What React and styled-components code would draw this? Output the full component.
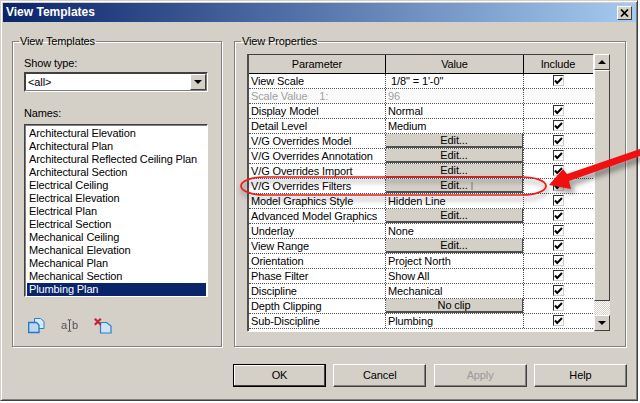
import React from "react";
import styled, { createGlobalStyle } from "styled-components";

const FONT = `"Liberation Sans", Arial, sans-serif`;

const names = [
  "Architectural Elevation",
  "Architectural Plan",
  "Architectural Reflected Ceiling Plan",
  "Architectural Section",
  "Electrical Ceiling",
  "Electrical Elevation",
  "Electrical Plan",
  "Electrical Section",
  "Mechanical Ceiling",
  "Mechanical Elevation",
  "Mechanical Plan",
  "Mechanical Section",
  "Plumbing Plan",
];

const rows = [
  { name: "View Scale", value: "1/8\" = 1'-0\"", indent: true, check: true },
  { name: "Scale Value    1:", value: "96", muted: true },
  { name: "Display Model", value: "Normal", check: true },
  { name: "Detail Level", value: "Medium", check: true },
  { name: "V/G Overrides Model", button: "Edit...", check: true },
  { name: "V/G Overrides Annotation", button: "Edit...", check: true },
  { name: "V/G Overrides Import", button: "Edit...", check: true },
  { name: "V/G Overrides Filters", button: "Edit...", check: true },
  { name: "Model Graphics Style", value: "Hidden Line", check: true },
  { name: "Advanced Model Graphics", button: "Edit...", check: true },
  { name: "Underlay", value: "None", check: true },
  { name: "View Range", button: "Edit...", check: true },
  { name: "Orientation", value: "Project North", check: true },
  { name: "Phase Filter", value: "Show All", check: true },
  { name: "Discipline", value: "Mechanical", check: true },
  { name: "Depth Clipping", button: "No clip", check: true },
  { name: "Sub-Discipline", value: "Plumbing", check: true },
];

function App() {
  return (
    <Page>
      <GlobalStyle />
      <Dialog>
        <TitleBar>
          <TitleText>View Templates</TitleText>
          <CloseButton>
            <svg width="9" height="8" viewBox="0 0 9 8">
              <path d="M1 0.5L8 7.5M8 0.5L1 7.5" stroke="#000" strokeWidth="1.7" />
            </svg>
          </CloseButton>
        </TitleBar>

        <Panels>
          <LeftGroup>
            <Legend $shift={-5}>View Templates</Legend>
            <FieldLabel>Show type:</FieldLabel>
            <ComboBox>
              <ComboText>&lt;all&gt;</ComboText>
              <ScrollButton>
                <Triangle $down />
              </ScrollButton>
            </ComboBox>
            <NamesLabel>Names:</NamesLabel>
            <ListBox>
              {names.map((n) => (
                <ListItem key={n} $selected={n === "Plumbing Plan"}>{n}</ListItem>
              ))}
            </ListBox>
            <IconRow>
              <IconSlot>
                <svg width="17" height="16" viewBox="0 0 17 16">
                  <path d="M6.5 0.5H12.5L16 3.5V10.5H6.5Z" fill="#dcebfa" stroke="#2a7fc9" />
                  <path d="M0.7 4.5H8.5L11 7V14.5H0.7Z" fill="#bcd8f2" stroke="#1f78c8" strokeWidth="1.3" />
                </svg>
              </IconSlot>
              <RenameIcon>
                <span>a</span>
                <svg width="7" height="17" viewBox="0 0 7 17">
                  <path d="M1 0.5H3L3.5 1.5L4 0.5H6M3.5 1.5V15.5M1 16.5H3L3.5 15.5L4 16.5H6" fill="none" stroke="#222" />
                </svg>
                <span>b</span>
              </RenameIcon>
              <IconSlot>
                <svg width="18" height="16" viewBox="0 0 18 16">
                  <path d="M6.5 4.5H12.5L17 8V15H6.5Z" fill="#cfe3f6" stroke="#2a7fc9" strokeWidth="1.2" />
                  <path d="M0.8 0.8L6.8 6.8M6.8 0.8L0.8 6.8" stroke="#cc2030" strokeWidth="2.2" />
                </svg>
              </IconSlot>
            </IconRow>
          </LeftGroup>

          <RightGroup>
            <Legend $shift={-6}>View Properties</Legend>
            <TableArea>
              <PropsTable>
                <HeaderRow>
                  <HeaderCell>Parameter</HeaderCell>
                  <HeaderCell>Value</HeaderCell>
                  <HeaderCell>Include</HeaderCell>
                </HeaderRow>
                {rows.map((r) => (
                  <Row key={r.name} $muted={r.muted}>
                    <NameCell>{r.name}</NameCell>
                    <ValueCell $indent={r.indent}>
                      {r.button ? <EditButton>{r.button}</EditButton> : r.value}
                    </ValueCell>
                    <CheckCell>
                      {r.check && (
                        <CheckBox>
                          <svg width="9" height="8" viewBox="0 0 9 8">
                            <path d="M1 3.5L3.2 6L8 1" fill="none" stroke="#000" strokeWidth="2" />
                          </svg>
                        </CheckBox>
                      )}
                    </CheckCell>
                  </Row>
                ))}
              </PropsTable>
              <ScrollBar>
                <ScrollButton><Triangle /></ScrollButton>
                <Thumb />
                <Track />
                <ScrollButton><Triangle $down /></ScrollButton>
              </ScrollBar>
            </TableArea>
          </RightGroup>
        </Panels>

        <ButtonRow>
          <DialogButton $primary>OK</DialogButton>
          <DialogButton>Cancel</DialogButton>
          <DialogButton $disabled>Apply</DialogButton>
          <DialogButton>Help</DialogButton>
        </ButtonRow>
      </Dialog>

      <Annotation width="640" height="403" viewBox="0 0 640 403">
        <defs>
          <filter id="soft" x="-20%" y="-60%" width="140%" height="220%">
            <feGaussianBlur stdDeviation="2.5" />
          </filter>
        </defs>
        <rect x="242" y="181" width="305" height="18" rx="24" ry="9" fill="none" stroke="#000" strokeOpacity="0.3" strokeWidth="2.5" filter="url(#soft)" />
        <rect x="241" y="177" width="305" height="18" rx="24" ry="9" fill="none" stroke="#ee1c1c" strokeWidth="1.7" />
        <path d="M472 182V190" stroke="#777" />
        <path d="M549 185L563 169L567 174L640 149V156L569 181L571 189Z" fill="#000" fillOpacity="0.35" filter="url(#soft)" transform="translate(4 5)" />
        <path d="M549 185L563 169L567 174L640 149V156L569 181L571 189Z" fill="#f01010" />
      </Annotation>
    </Page>
  );
}

const GlobalStyle = createGlobalStyle`
  html, body {
    margin: 0;
    padding: 0;
    background: #fff;
  }
`;

const Page = styled.div`
  position: relative;
  width: 640px;
  height: 403px;
  overflow: hidden;
`;

const Dialog = styled.div`
  width: 638px;
  height: 401px;
  box-sizing: border-box;
  padding: 2px 1px 1px 2px;
  background: #d4d0c8;
  border: 1px solid;
  border-color: #d4d0c8 #404040 #404040 #d4d0c8;
  box-shadow: inset 1px 1px 0 #fff, inset -1px -1px 0 #808080;
  font: 11px/13px ${FONT};
  letter-spacing: -0.12px;
  color: #000;
  display: flex;
  flex-direction: column;
`;

const TitleBar = styled.div`
  height: 19px;
  flex: none;
  display: flex;
  align-items: center;
  justify-content: space-between;
  padding: 0 4px 0 3px;
  background: linear-gradient(90deg, #0a246a 0%, #a6caf0 100%);
`;

const TitleText = styled.div`
  font: bold 12px/19px ${FONT};
  letter-spacing: 0;
  color: #fff;
`;

const CloseButton = styled.div`
  width: 15px;
  height: 14px;
  box-sizing: border-box;
  display: flex;
  align-items: center;
  justify-content: center;
  background: #d4d0c8;
  border: 1px solid;
  border-color: #fff #404040 #404040 #fff;
`;

const Panels = styled.div`
  display: flex;
  gap: 12px;
  padding: 13px 9px 0 9px;
`;

const LeftGroup = styled.fieldset`
  width: 210px;
  height: 312px;
  box-sizing: border-box;
  margin: 0;
  padding: 0 13px 0 11px;
  border: 1px solid #808080;
  box-shadow: 1px 1px 0 #fff, inset 1px 1px 0 #fff;
  min-width: 0;
`;

const RightGroup = styled(LeftGroup)`
  width: 392px;
  padding: 0 15px 0 12px;
`;

const Legend = styled.legend`
  padding: 0 1px;
  margin-left: ${(p) => p.$shift}px;
  line-height: 13px;
`;

const FieldLabel = styled.div`
  margin-top: 8px;
  line-height: 14px;
`;

const NamesLabel = styled(FieldLabel)`
  margin-top: 14px;
`;

const ComboBox = styled.div`
  width: 184px;
  height: 20px;
  margin-top: 2px;
  box-sizing: border-box;
  display: flex;
  align-items: center;
  justify-content: space-between;
  padding-right: 1px;
  background: #fff;
  border: 1px solid;
  border-color: #404040 #fff #fff #404040;
  box-shadow: inset -1px -1px 0 #808080, inset 1px 1px 0 #404040;
`;

const ComboText = styled.span`
  padding-left: 3px;
`;

const ListBox = styled.div`
  width: 184px;
  height: 173px;
  margin-top: 4px;
  box-sizing: border-box;
  padding: 2px 1px 0 2px;
  background: #fff;
  border: 1px solid;
  border-color: #404040 #fff #fff #404040;
  box-shadow: inset 1px 1px 0 #808080;
`;

const ListItem = styled.div`
  height: 13px;
  line-height: 13px;
  padding-left: 2px;
  white-space: nowrap;
  background: ${(p) => (p.$selected ? "#0a246a" : "transparent")};
  color: ${(p) => (p.$selected ? "#fff" : "#000")};
`;

const IconRow = styled.div`
  display: flex;
  align-items: center;
  gap: 16px;
  margin-top: 20px;
  padding-left: 4px;
`;

const IconSlot = styled.div`
  display: flex;
  height: 16px;
`;

const RenameIcon = styled.div`
  display: flex;
  align-items: center;
  justify-content: center;
  width: 17px;
  font-size: 11px;
  color: #555;
`;

const TableArea = styled.div`
  display: flex;
  align-items: flex-start;
  gap: 1px;
  margin-top: 6px;
`;

const PropsTable = styled.div`
  width: 346px;
  height: 277px;
  box-sizing: border-box;
  border-left: 2px solid #505050;
  border-top: 1px solid #404040;
  background: #fff;
  box-shadow: 1px 1px 0 #fff;
`;

const HeaderRow = styled.div`
  display: grid;
  grid-template-columns: 137px 138px 68px;
  height: 18px;
  border-bottom: 1px solid #000;
  background: #d4d0c8;
`;

const HeaderCell = styled.div`
  display: flex;
  align-items: center;
  justify-content: center;
  border-right: 1px solid #000;
  &:last-child {
    border-right: none;
  }
`;

const Row = styled.div`
  display: grid;
  grid-template-columns: 137px 138px 68px;
  height: 15px;
  box-sizing: border-box;
  border-bottom: 1px dotted #555;
  background: ${(p) => (p.$muted ? "#fafafa" : "#fff")};
  color: ${(p) => (p.$muted ? "#a0a0a0" : "#000")};
`;

const NameCell = styled.div`
  padding-left: 2px;
  line-height: 14px;
  white-space: pre;
  border-right: 1px dotted #555;
`;

const ValueCell = styled.div`
  padding-left: ${(p) => (p.$indent ? 5 : 2)}px;
  line-height: 14px;
  border-right: 1px dotted #555;
`;

const EditButton = styled.div`
  height: 14px;
  margin-left: -2px;
  box-sizing: border-box;
  line-height: 13px;
  text-align: center;
  color: #000;
  background: #d4d0c8;
  border-bottom: 2px solid #505050;
  border-right: 1px solid #505050;
`;

const CheckCell = styled.div`
  display: flex;
  justify-content: center;
`;

const CheckBox = styled.div`
  width: 11px;
  height: 11px;
  margin-top: 1px;
  box-sizing: border-box;
  display: flex;
  align-items: center;
  justify-content: center;
  background: #fff;
  border: 1px solid;
  border-color: #303030 #d4d0c8 #d4d0c8 #303030;
`;

const ScrollBar = styled.div`
  width: 16px;
  height: 277px;
  display: flex;
  flex-direction: column;
`;

const ScrollButton = styled.div`
  width: 16px;
  height: 16px;
  flex: none;
  box-sizing: border-box;
  display: flex;
  align-items: center;
  justify-content: center;
  background: #d4d0c8;
  border: 1px solid;
  border-color: #fff #404040 #404040 #fff;
`;

const Triangle = styled.span`
  width: 0;
  height: 0;
  border-left: 4px solid transparent;
  border-right: 4px solid transparent;
  ${(p) => (p.$down ? "border-top: 4px solid #000;" : "border-bottom: 4px solid #000;")}
`;

const Thumb = styled.div`
  height: 231px;
  flex: none;
  box-sizing: border-box;
  background: #d4d0c8;
  border: 1px solid;
  border-color: #fff #404040 #404040 #fff;
`;

const Track = styled.div`
  flex: 1;
  background: repeating-conic-gradient(#fff 0% 25%, #d4d0c8 0% 50%) 0 0 / 2px 2px;
`;

const ButtonRow = styled.div`
  display: flex;
  gap: 7.3px;
  padding: 17px 0 0 230px;
`;

const DialogButton = styled.div`
  width: 93px;
  height: 23px;
  box-sizing: border-box;
  display: flex;
  align-items: center;
  justify-content: center;
  background: #d4d0c8;
  border: 1px solid;
  border-color: #fff #404040 #404040 #fff;
  box-shadow: inset -1px -1px 0 #808080;
  color: ${(p) => (p.$disabled ? "#9a9a9a" : "#000")};
  ${(p) => p.$primary && "border-color: #000; box-shadow: inset -1px -1px 0 #404040, inset 1px 1px 0 #fff;"}
`;

const Annotation = styled.svg`
  position: absolute;
  left: 0;
  top: 0;
  pointer-events: none;
`;

export default App;
